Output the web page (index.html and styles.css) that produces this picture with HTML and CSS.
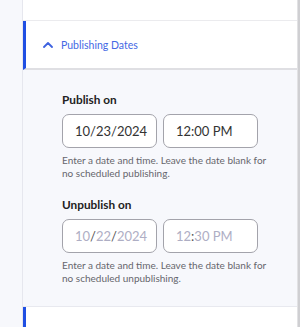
FILE: index.html
```html
<!DOCTYPE html>
<html lang="en">
<head>
    <meta charset="UTF-8">
    <meta name="viewport" content="width=device-width, initial-scale=1.0">
    <title>Publishing Dates</title>
    <link rel="stylesheet" href="styles.css">
</head>
<body>

    <!-- Left rail -->
    <div class="rail"></div>

    <!-- Settings column -->
    <div class="panel">
        <div class="card-top"></div>

        <!-- Accordion header -->
        <div class="acc-header">
            <svg class="chevron" width="10" height="6" viewBox="0 0 10 6">
                <path d="M1 5 L5 1 L9 5" fill="none" stroke="#3f63e0" stroke-width="1.8" stroke-linecap="round" stroke-linejoin="round"/>
            </svg>
            <span class="acc-title">Publishing Dates</span>
        </div>

        <!-- Accordion body -->
        <div class="acc-body">
            <div class="field">
                <div class="field-label">Publish on</div>
                <div class="field-inputs">
                    <div class="box">10/23/2024</div>
                    <div class="box">12:00 PM</div>
                </div>
                <div class="field-help">Enter a date and time. Leave the date blank for no scheduled publishing.</div>
            </div>

            <div class="field">
                <div class="field-label">Unpublish on</div>
                <div class="field-inputs">
                    <div class="box empty">10<span class="sep">/</span>22<span class="sep">/</span>2024</div>
                    <div class="box empty">12<span class="sep">:</span>30 PM</div>
                </div>
                <div class="field-help">Enter a date and time. Leave the date blank for no scheduled unpublishing.</div>
            </div>
        </div>

        <div class="card-next"></div>
    </div>

    <!-- Scrollbar edge -->
    <div class="edge"></div>

</body>
</html>
```

FILE: styles.css
```css
/* Page */
body {
    margin: 0;
    height: 327px;
    display: flex;
    font-family: Lato, "Liberation Sans", sans-serif;
    background-color: white;
    overflow: hidden;
}

/* Left rail */
.rail {
    width: 22px;
    background-color: #f7f8fc;
    border-right: 1px solid #e6e7ee;
}

/* Right scrollbar edge */
.edge {
    width: 2px;
    background-color: #cfcfd2;
    border-left: 1px solid #e2e2e4;
}

/* Main column */
.panel {
    flex: 1;
    display: flex;
    flex-direction: column;
}

.card-top {
    height: 20px;
    border-bottom: 1px solid #ebebee;
}

/* Accordion header */
.acc-header {
    height: 47px;
    display: flex;
    align-items: center;
    gap: 8px;
    padding-left: 17px;
    border-left: 3px solid #1f4fe3;
    border-bottom: 2px solid #dfdfe3;
}

.chevron {
    display: block;
}

.acc-title {
    font-size: 10.5px;
    color: #4468e4;
}

/* Accordion body */
.acc-body {
    height: 214px;
    background-color: #f7f8fc;
    padding: 22px 0 0 39px;
    border-bottom: 1px solid #e8e9ef;
}

.field {
    margin-bottom: 17px;
}

.field-label {
    font-size: 11.8px;
    font-weight: bold;
    color: #222;
    line-height: 16px;
    margin-bottom: 6px;
}

.field-inputs {
    display: flex;
    gap: 6px;
}

.box {
    width: 81px;
    height: 32px;
    padding-left: 12px;
    border: 1px solid #a3a3ab;
    border-radius: 7px;
    background-color: white;
    font-size: 13px;
    color: #333;
    display: flex;
    align-items: center;
}

.box.empty {
    color: #aeaec4;
}

.box .sep {
    color: #555;
}

.field-help {
    width: 210px;
    margin-top: 6px;
    font-size: 10px;
    line-height: 13px;
    color: #66666c;
}

/* Next accordion */
.card-next {
    flex: 1;
    border-left: 3px solid #1f4fe3;
}
```
